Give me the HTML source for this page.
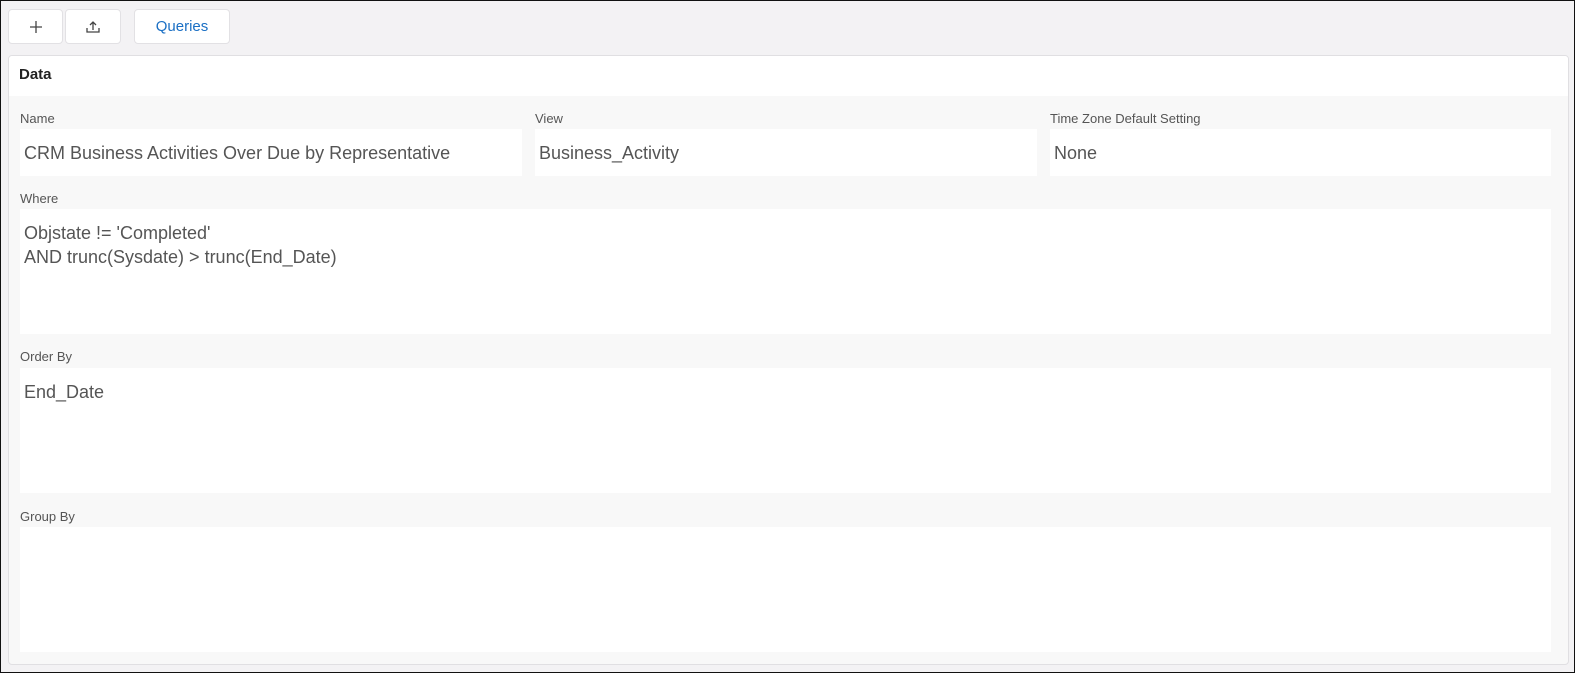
<!DOCTYPE html>
<html><head><style>
*{box-sizing:border-box;margin:0;padding:0}
body{width:1575px;height:673px;background:#f3f2f4;font-family:"Liberation Sans",sans-serif;position:relative;overflow:hidden;border:1px solid #111;}
.btn{position:absolute;top:8px;height:35px;background:#fff;border:1px solid #e2e1e4;border-radius:4px;display:flex;align-items:center;justify-content:center;color:#333}
.panel{position:absolute;left:7px;top:54px;width:1561px;height:610px;background:#f8f8f8;border:1px solid #e0dfe2;border-radius:4px;overflow:hidden}
.hdr{position:absolute;left:0;top:0;right:0;height:40px;background:#fff;font-size:15px;font-weight:bold;color:#222;padding:10px 0 0 10px}
.lbl{position:absolute;font-size:13px;color:#555}
.box{position:absolute;background:#fff;font-size:18px;color:#555;padding:12px 4px;line-height:24px}
</style></head><body>
<div class="btn" style="left:7px;width:55px"><svg width="14" height="14"><path d="M7 1v12M1 7h12" stroke="#444" stroke-width="1.3"/></svg></div>
<div class="btn" style="left:64px;width:56px"><svg width="16" height="14"><path d="M8 10V2M5 5l3-3 3 3M2 8v4h12V8" stroke="#444" stroke-width="1.3" fill="none"/></svg></div>
<div class="btn" style="left:133px;width:96px;color:#1a6fc4;font-size:15px">Queries</div>
<div class="panel">
<div class="hdr">Data</div>
<div class="lbl" style="left:11px;top:55px">Name</div>
<div class="box" style="left:11px;top:73px;width:502px;height:47px">CRM Business Activities Over Due by Representative</div>
<div class="lbl" style="left:526px;top:55px">View</div>
<div class="box" style="left:526px;top:73px;width:502px;height:47px">Business_Activity</div>
<div class="lbl" style="left:1041px;top:55px">Time Zone Default Setting</div>
<div class="box" style="left:1041px;top:73px;width:501px;height:47px">None</div>
<div class="lbl" style="left:11px;top:135px">Where</div>
<div class="box" style="left:11px;top:153px;width:1531px;height:125px">Objstate != 'Completed'<br>AND trunc(Sysdate) &gt; trunc(End_Date)</div>
<div class="lbl" style="left:11px;top:293px">Order By</div>
<div class="box" style="left:11px;top:312px;width:1531px;height:125px">End_Date</div>
<div class="lbl" style="left:11px;top:453px">Group By</div>
<div class="box" style="left:11px;top:471px;width:1531px;height:125px"></div>
</div>
</body></html>
